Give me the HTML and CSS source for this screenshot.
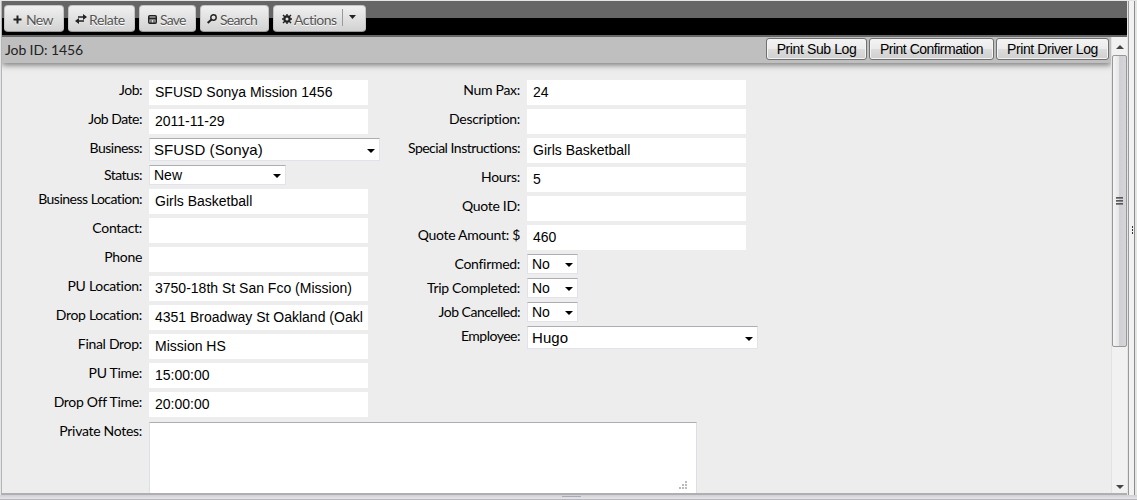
FILE: index.html
```html
<!DOCTYPE html>
<html lang="en">
<head>
<meta charset="utf-8">
<title>Job 1456</title>
<link rel="stylesheet" href="styles.css">
</head>
<body>
<div class="workspace">
  <div class="panel">
    <div class="toolbar">
      <div class="tool tool-new"><svg width="9" height="9" viewBox="0 0 9 9"><path d="M4.5 .5v8M.5 4.5h8" stroke="#222" stroke-width="2" fill="none"/></svg><span>New</span></div>
      <div class="tool tool-relate"><svg width="12" height="10" viewBox="0 0 12 10"><path d="M3 3h6M3 7h6" stroke="#222" stroke-width="1.7" fill="none"/><path d="M8 0l4 3-4 3zM4 4L0 7l4 3z" fill="#222"/></svg><span>Relate</span></div>
      <div class="tool tool-save"><svg width="9" height="9" viewBox="0 0 9 9"><rect x=".75" y=".75" width="7.5" height="7.5" rx="1" stroke="#222" stroke-width="1.5" fill="none"/><path d="M1 3.500h7" stroke="#222" stroke-width="2" fill="none"/><path d="M3 5v3M6 5v3" stroke="#222" stroke-width="1" fill="none"/></svg><span>Save</span></div>
      <div class="tool tool-search"><svg width="10" height="10" viewBox="0 0 10 10"><circle cx="6.500" cy="3.500" r="2.700" stroke="#222" stroke-width="1.400" fill="none"/><path d="M4.500 5.500L.7 9" stroke="#222" stroke-width="2" fill="none"/></svg><span>Search</span></div>
      <div class="tool tool-actions"><svg width="10" height="10" viewBox="0 0 10 10"><circle cx="5" cy="5" r="2.600" stroke="#222" stroke-width="2.200" fill="none"/><path d="M5 0v2M5 8v2M0 5h2M8 5h2M1 1l1.800 1.800M7.200 7.200L9 9M9 1L7.200 2.800M2.800 7.200L1 9" stroke="#222" stroke-width="1.400"/></svg><span>Actions</span><i class="split"></i><svg class="caret" width="7" height="4" viewBox="0 0 7 4"><path d="M0 0h7L3.500 4z" fill="#222"/></svg></div>
    </div>
    <div class="body">
      <div class="content">
        <div class="titlebar">
          <div class="title">Job ID: 1456</div>
          <div class="print p1">Print Sub Log</div>
          <div class="print p2">Print Confirmation</div>
          <div class="print p3">Print Driver Log</div>
        </div>
        <div class="form">
          <div class="column first">
            <div class="row"><label class="snug">Job:</label><div class="input">SFUSD Sonya Mission 1456</div></div>
            <div class="row"><label class="snug">Job Date:</label><div class="input">2011-11-29</div></div>
            <div class="row tall"><label class="snug">Business:</label><div class="select large">SFUSD (Sonya)</div></div>
            <div class="row"><label class="snug">Status:</label><div class="select status">New</div></div>
            <div class="row"><label class="snug">Business Location:</label><div class="input">Girls Basketball</div></div>
            <div class="row"><label>Contact:</label><div class="input"></div></div>
            <div class="row"><label>Phone</label><div class="input"></div></div>
            <div class="row"><label>PU Location:</label><div class="input">3750-18th St San Fco (Mission)</div></div>
            <div class="row"><label>Drop Location:</label><div class="input">4351 Broadway St Oakland (Oakl</div></div>
            <div class="row"><label>Final Drop:</label><div class="input">Mission HS</div></div>
            <div class="row"><label>PU Time:</label><div class="input">15:00:00</div></div>
            <div class="row"><label>Drop Off Time:</label><div class="input">20:00:00</div></div>
            <div class="row"><label>Private Notes:</label><div class="notes"><svg width="8" height="8" viewBox="0 0 8 8"><path d="M6 0h2v2H6zM3 3h2v2H3zM6 3h2v2H6zM0 6h2v2H0zM3 6h2v2H3zM6 6h2v2H6z" fill="#bbb"/></svg></div></div>
          </div>
          <div class="column second">
            <div class="row"><label>Num Pax:</label><div class="input">24</div></div>
            <div class="row"><label>Description:</label><div class="input"></div></div>
            <div class="row"><label class="snug">Special Instructions:</label><div class="input">Girls Basketball</div></div>
            <div class="row"><label>Hours:</label><div class="input">5</div></div>
            <div class="row"><label>Quote ID:</label><div class="input"></div></div>
            <div class="row"><label>Quote Amount: $</label><div class="input">460</div></div>
            <div class="row"><label>Confirmed:</label><div class="select">No</div></div>
            <div class="row"><label>Trip Completed:</label><div class="select">No</div></div>
            <div class="row"><label class="snug">Job Cancelled:</label><div class="select">No</div></div>
            <div class="row"><label class="snug">Employee:</label><div class="select large">Hugo</div></div>
          </div>
        </div>
      </div>
      <div class="scrollbar">
        <div class="arrow"><svg width="8" height="4" viewBox="0 0 8 4"><path d="M0 4h8L4 0z" fill="#444"/></svg></div>
        <div class="thumb"><i></i><i></i><i></i></div>
        <div class="arrow end"><svg width="8" height="4" viewBox="0 0 8 4"><path d="M0 0h8L4 4z" fill="#444"/></svg></div>
      </div>
    </div>
  </div>
  <div class="splitter"><i></i><i></i><i></i></div>
</div>
<div class="footer"><i></i></div>
</body>
</html>
```
FILE: styles.css
```css
* { box-sizing: border-box; }
body {
  margin: 0;
  width: 1137px;
  height: 500px;
  overflow: hidden;
  background: #f0f0f0;
  font-family: Lato, sans-serif;
  font-size: 14px;
  color: #000;
}
.workspace { display: flex; height: 495px; padding: 1px 0 0 1px; background: #e4e6e4; }
.panel { width: 1126px; border-left: 1px solid #b4b4bd; border-bottom: 2px solid #aeaeb4; display: flex; flex-direction: column; }
.toolbar {
  height: 36px;
  flex: none;
  display: flex;
  gap: 4px;
  padding: 4px 2px 0;
  background: linear-gradient(#666 17px, #000 17px, #000 34px, #666 34px);
}
.tool {
  height: 27px;
  display: flex;
  align-items: center;
  border: 1px solid #c5c5c5;
  border-bottom-color: #999;
  border-radius: 4px;
  background: linear-gradient(#f0f0f0, #d2d2d2);
  color: #555;
  padding: 1px 0 0 8px;
  gap: 4px;
  white-space: nowrap;
  text-shadow: 0 1px 0 #fff;
}
.tool svg { flex: none; }
.tool span { letter-spacing: -0.4px; }
.tool-new { width: 60px; }
.tool-new span { letter-spacing: -0.6px; }
.tool-relate { width: 67px; padding-left: 6px; gap: 2px; }
.tool-save { width: 57px; gap: 3px; }
.tool-save span { letter-spacing: -0.8px; }
.tool-search { width: 69px; padding-left: 6px; gap: 3px; }
.tool-search span { letter-spacing: -0.7px; }
.tool-actions { width: 93px; gap: 2px; }
.tool-actions span { letter-spacing: -0.5px; }
.split { width: 1px; height: 17px; background: #999; margin: -3px 4px 0 3px; }
.caret { margin-top: -4px; }
.body { flex: 1; display: flex; min-height: 0; }
.content { width: 1109px; overflow: hidden; background: #ededed; }
.titlebar {
  height: 26px;
  display: flex;
  gap: 2px;
  padding: 1px 2px 0 3px;
  background: #bfbfbf;
  box-shadow: 0 2px 6px rgba(0, 0, 0, .5);
}
.title { flex: 1; line-height: 24px; color: #222; letter-spacing: -0.1px; }
.print {
  height: 22px;
  border: 1px solid #707070;
  border-radius: 3px;
  background: linear-gradient(#f3f3f3, #ebebeb 50%, #ddd 50%, #cfcfcf);
  box-shadow: inset 0 0 0 1px #f4f4f4;
  font: 14px/20px "Liberation Sans", Arial, sans-serif;
  text-align: center;
  white-space: nowrap;
}
.p1 { width: 101px; letter-spacing: -0.4px; }
.p2 { width: 125px; letter-spacing: -0.5px; }
.p3 { width: 113px; letter-spacing: -0.4px; }
.form { display: flex; padding-top: 17px; }
.column { display: flex; flex-direction: column; gap: 4px; width: 380px; }
.row { display: flex; align-items: flex-start; }
.tall { height: 23px; }
label { flex: none; line-height: 20px; text-align: right; white-space: nowrap; letter-spacing: -0.3px; }
.snug { letter-spacing: -0.5px; }
.first label { width: 140px; margin-right: 7px; }
.second label { width: 138px; margin-right: 7px; }
.input {
  width: 219px;
  height: 25px;
  background: #fff;
  padding: 0 0 0 6px;
  font: 14px/24px "Liberation Sans", Arial, sans-serif;
  white-space: nowrap;
  flex: none;
}
.select {
  position: relative;
  flex: none;
  width: 51px;
  height: 20px;
  padding-left: 4px;
  border: 1px solid #e2e3ea;
  border-top-color: #abadb3;
  background: #fff;
  font: 14px/19px "Liberation Sans", Arial, sans-serif;
}
.select::after {
  content: "";
  position: absolute;
  right: 4px;
  top: 50%;
  margin-top: -1px;
  border: 4px solid transparent;
  border-top-color: #000;
  border-bottom: 0;
}
.status { width: 137px; }
.large { width: 231px; height: 23px; font-size: 15px; line-height: 22px; letter-spacing: 0.1px; }
.notes {
  flex: none;
  width: 548px;
  height: 90px;
  margin-top: 1px;
  border: 1px solid #dcdfe8;
  border-top-color: #abadb3;
  background: #fff;
  display: flex;
  justify-content: flex-end;
  padding: 58px 9px 0 0;
}
.scrollbar { width: 16px; background: #f1f1f1; border-left: 1px solid #e3e3e3; display: flex; flex-direction: column; align-items: center; }
.arrow { height: 18px; padding-top: 7px; line-height: 0; flex: none; }
.end { margin-top: auto; height: 9px; padding-top: 0; }
.thumb {
  width: 15px;
  height: 292px;
  border: 1px solid #979797;
  border-radius: 2px;
  background: linear-gradient(90deg, #f5f5f5, #e6e6e8 45%, #cfcfd4 50%, #d5d5da);
  display: flex;
  flex-direction: column;
  align-items: center;
  justify-content: center;
  gap: 1px;
}
.thumb i { width: 7px; height: 2px; background: linear-gradient(#444, #999); }
.splitter {
  width: 7px;
  margin-left: 1px;
  border-left: 1px solid #999;
  border-right: 1px solid #8c8c8c;
  background: #f2f2f2;
  display: flex;
  flex-direction: column;
  gap: 1px;
  align-items: flex-end;
  padding: 225px 1px 0 0;
}
.splitter i { width: 1px; height: 2px; background: #333; }
.footer { height: 5px; background: linear-gradient(#d3cfcf, #e6e6e9 4px, #b6b6c2 4px); padding: 1px 0 0 562px; }
.footer i { display: block; width: 19px; height: 1px; background: #a8aabb; }
```
